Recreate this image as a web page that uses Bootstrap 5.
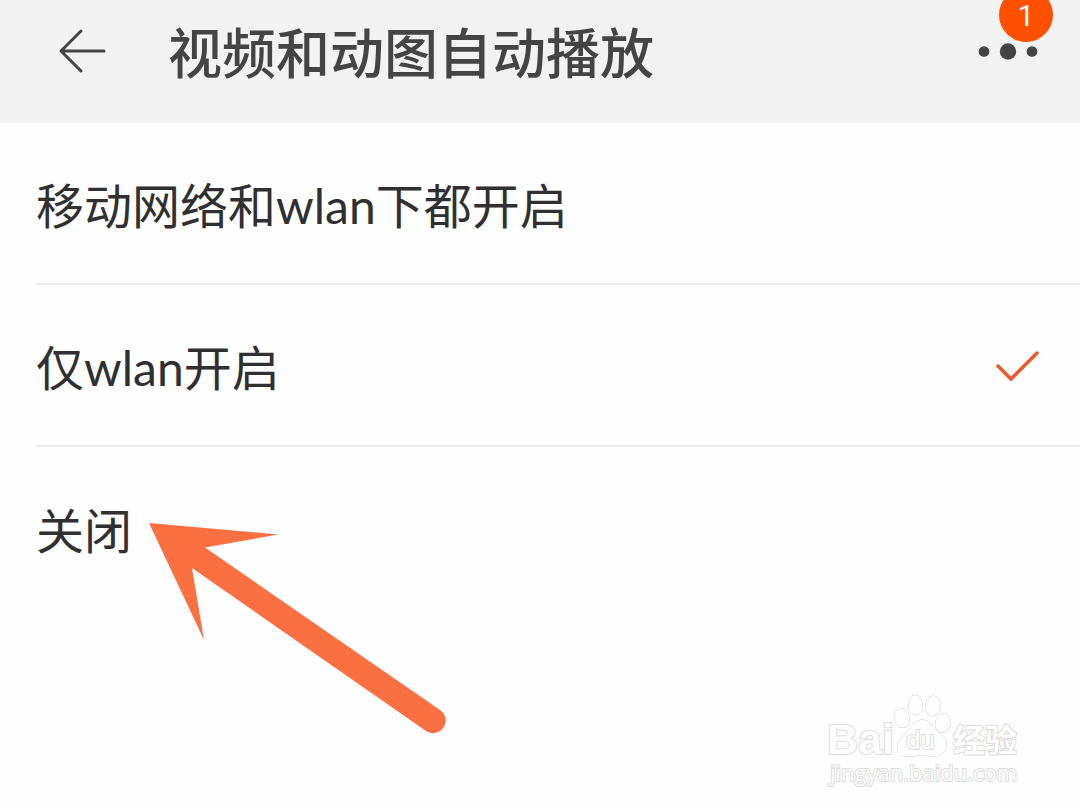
<!DOCTYPE html>
<html lang="zh-CN">
<head>
<meta charset="utf-8">
<meta name="viewport" content="width=device-width, initial-scale=1">
<title>视频和动图自动播放</title>
<link href="https://cdn.jsdelivr.net/npm/bootstrap@5.3.0/dist/css/bootstrap.min.css" rel="stylesheet">
<style>
  body { font-family: Lato, "Noto Sans CJK SC", sans-serif; background: #fefefe; color: #303030; }
  .topbar { background: #f2f2f2; color: #444; padding: 0 40px 20px 56px; height: 123px; }
  .topbar h1 { font-size: 54px; line-height: 64px; font-weight: 500; margin-left: 60px; padding-top: 4px; }
  .icon-btn { color: inherit; line-height: 1; }
  .notice { background: #ff5000; color: #fff; font-family: Roboto, sans-serif; font-size: 30px; line-height: 28px; width: 54px; height: 54px; top: -55px; right: -13px; padding-top: 14px; }
  .option { margin-left: 36px; padding-right: 40px; min-height: 162px; font-size: 48px; line-height: 64px; border-bottom: 2px solid #ededed; }
  .option:last-child { border-bottom: 0; }
  .option label { cursor: pointer; padding-top: 6px; }
  .tick { visibility: hidden; }
  .option input:checked ~ .tick { visibility: visible; }
  .pointer { left: 112px; top: 74px; pointer-events: none; }
  .watermark { margin-right: 50px; }
  .watermark text, .watermark .paw { fill: #fefefe; stroke: #dcdcdc; stroke-width: 2; paint-order: stroke; }
  .watermark .paw { stroke-width: 1; stroke: #d0d0d0; }
</style>
</head>
<body>
<div class="min-vh-100 d-flex flex-column overflow-hidden">
  <header class="topbar d-flex align-items-center">
    <button class="btn icon-btn border-0 p-0" type="button" aria-label="返回">
      <svg class="d-block" width="52" height="48" viewBox="0 0 52 48" fill="none" stroke="currentColor" stroke-width="3" stroke-linecap="round" stroke-linejoin="round"><path d="M25 3 5 23 25 43M5 23H48"/></svg>
    </button>
    <h1 class="mb-0 flex-grow-1">视频和动图自动播放</h1>
    <button class="btn icon-btn border-0 p-0 position-relative" type="button" aria-label="更多">
      <svg class="d-block" width="62" height="18" viewBox="0 0 62 18" fill="currentColor"><circle cx="6" cy="8.500" r="5.300"/><circle cx="30" cy="8.500" r="8.200"/><circle cx="54" cy="8.500" r="5.300"/></svg>
      <span class="notice position-absolute rounded-circle text-center">1</span>
    </button>
  </header>
  <main>
    <form>
      <div class="option d-flex align-items-center">
        <input class="visually-hidden" type="radio" name="autoplay" id="all">
        <label class="flex-grow-1" for="all">移动网络和wlan下都开启</label>
        <svg class="tick" width="46" height="34" viewBox="0 0 46 34" fill="none" stroke="#e9592b" stroke-width="3.500" stroke-linecap="round"><path d="M4 18 17 31 43 5"/></svg>
      </div>
      <div class="option d-flex align-items-center">
        <input class="visually-hidden" type="radio" name="autoplay" id="wlan" checked>
        <label class="flex-grow-1" for="wlan">仅wlan开启</label>
        <svg class="tick" width="46" height="34" viewBox="0 0 46 34" fill="none" stroke="#e9592b" stroke-width="3.500" stroke-linecap="round"><path d="M4 18 17 31 43 5"/></svg>
      </div>
      <div class="option d-flex align-items-center position-relative">
        <input class="visually-hidden" type="radio" name="autoplay" id="off">
        <label class="flex-grow-1" for="off">关闭</label>
        <svg class="pointer position-absolute" width="300" height="214" viewBox="0 0 300 214" fill="#fa7040" aria-hidden="true"><path d="M1 2 130 13.500 57 26.500 327 214" fill="none"/><path d="M1 2 130 13.500 57 26.500 292 189A12.300 12.300 0 0 1 278 210L44 47 56 119Z"/></svg>
      </div>
    </form>
  </main>
  <footer class="watermark mt-auto ms-auto">
    <svg class="d-block" width="206" height="120" viewBox="0 0 206 120" role="img" aria-label="Baidu经验">
      <text x="3" y="64" font-family="Liberation Sans, sans-serif" font-size="43" font-weight="700">Bai</text>
      <g class="paw">
        <ellipse cx="78" cy="28" rx="7.500" ry="9.500" transform="rotate(-8 78 28)"/>
        <ellipse cx="91.500" cy="15" rx="7" ry="10"/>
        <ellipse cx="109" cy="16" rx="7.500" ry="10" transform="rotate(10 109 16)"/>
        <ellipse cx="119" cy="33" rx="7.500" ry="9.500" transform="rotate(14 119 33)"/>
        <path d="M97 30C106 29 109 38 116 43C126 50 125 66 110 66C104 67 100 64 94 65C86 67 76 68 74 60C72 50 79 47 84 41C88 36 90 31 97 30Z"/>
      </g>
      <text x="82" y="59" font-family="Liberation Sans, sans-serif" font-size="26">du</text>
      <text x="6" y="91" font-family="Open Sans, sans-serif" font-size="22">jingyan.baidu.com</text>
      <text x="129" y="62" font-family="Noto Sans CJK SC, sans-serif" font-size="32" font-weight="700">经验</text>
    </svg>
  </footer>
</div>
<script src="https://cdn.jsdelivr.net/npm/bootstrap@5.3.0/dist/js/bootstrap.bundle.min.js"></script>
</body>
</html>
